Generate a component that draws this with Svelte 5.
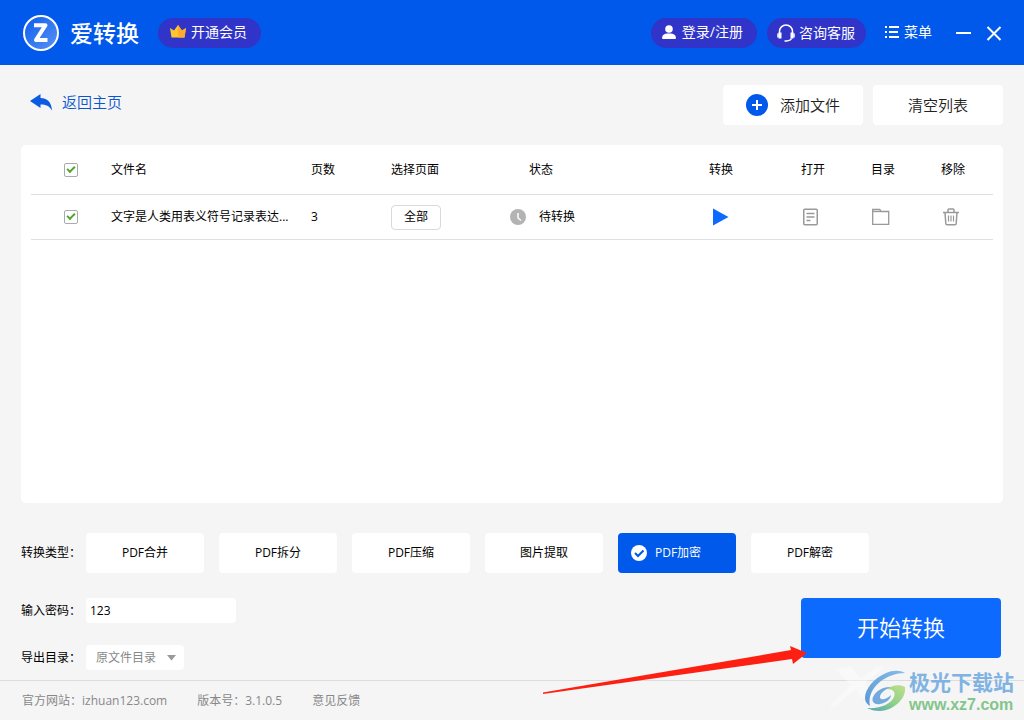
<script>
  const columns = ['文件名', '页数', '选择页面', '状态', '转换', '打开', '目录', '移除'];
  const types = ['PDF合并', 'PDF拆分', 'PDF压缩', '图片提取', 'PDF加密', 'PDF解密'];

  let files = [
    { name: '文字是人类用表义符号记录表达...', pages: 3, range: '全部', status: '待转换', checked: true }
  ];
  let allChecked = true;
  let selected = 'PDF加密';
  let password = '123';

  function toggleAll() {
    files = files.map((f) => ({ ...f, checked: allChecked }));
  }

  function remove(file) {
    files = files.filter((f) => f !== file);
  }
</script>

<div class="app">
  <header>
    <svg class="logo" width="36" height="36" viewBox="0 0 36 36" aria-hidden="true">
      <defs>
        <linearGradient id="disc" x1="0" y1="0" x2="1" y2="1">
          <stop offset="0" stop-color="#0a5cec" />
          <stop offset="1" stop-color="#5c93f5" />
        </linearGradient>
      </defs>
      <circle cx="18" cy="18" r="17" fill="url(#disc)" stroke="#fff" stroke-width="2" />
      <path d="M11 10.200H22.500L13 25H24.500" fill="none" stroke="#fff" stroke-width="4" stroke-linejoin="round" />
    </svg>
    <h1>爱转换</h1>
    <button class="pill vip">
      <svg width="16" height="14" viewBox="0 0 16 14" aria-hidden="true">
        <path d="M0 3l4 2.500L8 0l4 5.500L16 3l-1.500 9.500h-13z" fill="#fdc62f" />
        <path d="M8 0l4 5.500L16 3l-1.500 9.500H8z" fill="#ffab2e" />
      </svg>
      开通会员
    </button>
    <div class="tools">
      <button class="pill">
        <svg width="14" height="14" viewBox="0 0 14 14" fill="#fff" aria-hidden="true">
          <circle cx="7" cy="4" r="3.800" />
          <path d="M1 14q-1 0-1-1.500C.5 9.500 3 8.500 5 8.500h4c2 0 4.500 1 5 4q0 1.500-1 1.500z" />
        </svg>
        登录/注册
      </button>
      <button class="pill service">
        <svg width="18" height="18" viewBox="0 0 18 18" fill="none" stroke="#fff" aria-hidden="true">
          <path d="M2.500 10V7.500a6.500 6.500 0 0 1 13 0V10" stroke-width="1.500" />
          <path d="M3 8.500v6M15 8.500v6" stroke-width="3" />
          <path d="M1 9.500v4M17 9.500v4" stroke-width="1.500" />
          <path d="M14.500 14.500q-1 2.200-5 2.500H7.500" stroke-width="1.300" />
        </svg>
        咨询客服
      </button>
      <button class="menu">
        <svg width="14" height="12" viewBox="0 0 14 12" fill="#fff" aria-hidden="true">
          <path d="M0 0h2v2H0zM4 0h10v2H4zM0 5h2v2H0zM4 5h9v2H4zM0 10h2v2H0zM4 10h10v2H4z" />
        </svg>
        菜单
      </button>
      <button class="win" aria-label="最小化">
        <svg width="16" height="16" viewBox="0 0 16 16"><path d="M0 8h15" stroke="#fff" stroke-width="2" /></svg>
      </button>
      <button class="win" aria-label="关闭">
        <svg width="16" height="16" viewBox="0 0 16 16"><path d="M1.500 2l13 13M14.500 2l-13 13" stroke="#fff" stroke-width="2" /></svg>
      </button>
    </div>
  </header>

  <main>
    <div class="bar">
      <a class="back" href="#home">
        <svg width="22" height="17" viewBox="0 0 22 17" aria-hidden="true">
          <path d="M0 7L10.500 0v4C17 4 21.500 8 22 16.500 19.500 12 16 10.500 10.500 10.500V14z" fill="#0b5be3" />
        </svg>
        返回主页
      </a>
      <button class="add">
        <svg width="22" height="22" viewBox="0 0 22 22" aria-hidden="true">
          <circle cx="11" cy="11" r="11" fill="#0059ea" />
          <path d="M6 11h10M11 6v10" stroke="#fff" stroke-width="2" />
        </svg>
        添加文件
      </button>
      <button class="clear" on:click={() => (files = [])}>清空列表</button>
    </div>

    <section class="card">
      <table>
        <colgroup>
          <col class="c-check" /><col /><col class="c-pages" /><col class="c-range" /><col class="c-status" />
          <col class="c-run" /><col class="c-icon" /><col class="c-icon" /><col class="c-last" />
        </colgroup>
        <thead>
          <tr>
            <th class="check"><input type="checkbox" aria-label="全选" bind:checked={allChecked} on:change={toggleAll} /></th>
            {#each columns as col}
              <th class:status={col === '状态'}>{col}</th>
            {/each}
          </tr>
        </thead>
        <tbody>
          {#each files as file}
            <tr>
              <td class="check"><input type="checkbox" aria-label={file.name} bind:checked={file.checked} /></td>
              <td>{file.name}</td>
              <td>{file.pages}</td>
              <td><button class="range">{file.range}</button></td>
              <td>
                <span class="state">
                  <svg width="16" height="16" viewBox="0 0 16 16" aria-hidden="true">
                    <circle cx="8" cy="8" r="8" fill="#b3b3b3" />
                    <path d="M8 4v5l3 2.500" fill="none" stroke="#fff" stroke-width="1.500" />
                  </svg>
                  {file.status}
                </span>
              </td>
              <td>
                <button class="icon run" aria-label="转换">
                  <svg width="18" height="18" viewBox="0 0 18 18"><path d="M1 .5L16.500 9 1 17.500z" fill="#0d6aff" /></svg>
                </button>
              </td>
              <td>
                <button class="icon" aria-label="打开">
                  <svg width="18" height="18" viewBox="0 0 18 18" fill="none" stroke="#999" stroke-width="1.500">
                    <rect x="1.750" y="1.250" width="13.500" height="15.500" rx="1" />
                    <path d="M4.500 5.500h8M4.500 9h8M4.500 12.500h4" />
                  </svg>
                </button>
              </td>
              <td>
                <button class="icon" aria-label="目录">
                  <svg width="18" height="18" viewBox="0 0 18 18" fill="none" stroke="#999" stroke-width="1.300">
                    <path d="M.7 16.300V1.500h7l1.500 2h7.500v12.800z" />
                    <path d="M.7 3.500h8.500" />
                  </svg>
                </button>
              </td>
              <td>
                <button class="icon" aria-label="移除" on:click={() => remove(file)}>
                  <svg width="18" height="18" viewBox="0 0 18 18" fill="none" stroke="#999" stroke-width="1.500">
                    <path d="M1 4.500h16M6 4V2q0-1 1-1h4q1 0 1 1v2M3 4.500l.8 11q.1 1.200 1.200 1.200h8q1.100 0 1.200-1.200l.8-11" />
                    <path d="M6.500 7.500v6M9 7.500v6M11.500 7.500v6" stroke-width="1.200" />
                  </svg>
                </button>
              </td>
            </tr>
          {/each}
        </tbody>
      </table>
    </section>

    <div class="types">
      <span class="label">转换类型：</span>
      {#each types as type}
        <button class="type" class:active={selected === type} on:click={() => (selected = type)}>
          {#if selected === type}
            <svg width="16" height="16" viewBox="0 0 16 16" aria-hidden="true">
              <circle cx="8" cy="8" r="8" fill="#fff" />
              <path d="M4 8l3 3 5.500-5.500" fill="none" stroke="#0059ea" stroke-width="2" />
            </svg>
          {/if}
          {type}
        </button>
      {/each}
    </div>

    <div class="bottom">
      <div class="fields">
        <div class="field">
          <label class="label" for="password">输入密码：</label>
          <input id="password" type="text" bind:value={password} />
        </div>
        <div class="field">
          <label class="label" for="output">导出目录：</label>
          <div class="select">
            <select id="output">
              <option>原文件目录</option>
              <option>自定义目录</option>
            </select>
            <svg width="9" height="6" viewBox="0 0 9 6" aria-hidden="true"><path d="M0 0h9L4.500 5.500z" fill="#999" /></svg>
          </div>
        </div>
      </div>
      <button class="start">开始转换</button>
    </div>
  </main>

  <footer>
    <span>官方网站：<a href="#site">izhuan123.com</a></span>
    <span>版本号：3.1.0.5</span>
    <a href="#feedback">意见反馈</a>
  </footer>

  <svg class="pointer" width="270" height="60" viewBox="0 0 270 60" aria-hidden="true">
    <path d="M3 52.500L251 10 250 6l17 7-14 11-1-5L3 54z" fill="#fd2012" />
  </svg>

  <div class="mark">
    <svg width="80" height="52" viewBox="0 0 80 52" aria-hidden="true">
      <defs>
        <linearGradient id="leaf" x1="0" y1="1" x2="1" y2="0">
          <stop offset="0" stop-color="#4fa3b8" />
          <stop offset=".5" stop-color="#8fd08a" />
          <stop offset="1" stop-color="#bfe08c" />
        </linearGradient>
        <linearGradient id="wave" x1="0" y1="1" x2="1" y2="0">
          <stop offset="0" stop-color="#5b97d4" />
          <stop offset="1" stop-color="#84bdea" />
        </linearGradient>
      </defs>
      <path d="M4 6l16-2 10 11L46 4h8L34 20l9 14H30l-5-8L2 45l-4-1 22-22z" fill="#fff" opacity=".4" />
      <path d="M74 10C69 7 62 7 55 10 43 15 34 26 34 35c0 4 2 6 5 8-2-9 2-18 11-25 7-5 15-8 24-8z" fill="url(#wave)" />
      <path d="M64 25C56 22 46 26 42 34c-2 5 2 8 7 7 6-1 11-5 11-9-3 3-7 5-10 4-3-2 1-8 6-10 2-1 5-1 8-1z" fill="#74a9de" />
      <path d="M36 45c8 4 18 4 26-1 8-5 13-12 12-20-5-3-13-2-18 2 6 0 9 3 7 8-3 7-14 12-27 11z" fill="url(#leaf)" />
    </svg>
    <div class="words">
      <strong>极光下载站</strong>
      <span>www.xz7.com</span>
    </div>
  </div>
</div>

<style>
  :global(body) {
    background: #f5f5f5;
  }

  .app {
    position: relative;
    display: flex;
    flex-direction: column;
    min-height: 100vh;
    font-family: "Open Sans", "Noto Sans CJK SC", sans-serif;
    font-size: 12px;
    line-height: 18px;
    color: #000;
  }

  button,
  input,
  select {
    font: inherit;
    color: inherit;
    border: none;
    margin: 0;
    padding: 0;
  }

  button {
    display: flex;
    align-items: center;
    justify-content: center;
    border-radius: 4px;
    background: #fff;
    white-space: nowrap;
    cursor: pointer;
  }

  svg {
    display: block;
    flex: none;
  }

  a {
    color: inherit;
    text-decoration: none;
  }

  header {
    display: flex;
    align-items: center;
    height: 65px;
    box-sizing: border-box;
    padding: 0 22px 0 23px;
    background: #0059ea;
    color: #fff;
  }

  h1 {
    margin: 0 19px 0 11px;
    font-size: 23px;
    line-height: 32px;
    font-weight: 500;
  }

  .pill {
    height: 30px;
    padding: 0 14px 2px 11px;
    box-sizing: border-box;
    gap: 6px;
    border-radius: 15px;
    background: #3034c8;
    font-size: 14px;
  }

  .vip {
    gap: 5px;
    padding-left: 12px;
  }

  .tools {
    display: flex;
    align-items: center;
    gap: 10px;
    margin-left: auto;
  }

  .service {
    gap: 4px;
    padding: 0 11px 0 10px;
  }

  .menu {
    gap: 5px;
    margin: 0 14px 0 9px;
    padding-bottom: 2px;
    background: none;
    font-size: 14px;
  }

  .win {
    background: none;
  }

  .win + .win {
    margin-left: 4px;
  }

  main {
    display: flex;
    flex: 1;
    flex-direction: column;
    padding: 20px 21px 10px;
  }

  .bar {
    display: flex;
    gap: 10px;
    margin-bottom: 20px;
    font-size: 15px;
    font-weight: 350;
    color: #222;
  }

  .back {
    display: flex;
    align-items: center;
    gap: 10px;
    height: 34px;
    margin: 0 auto 0 9px;
    color: #0b55cf;
  }

  .bar button {
    height: 40px;
  }

  .add {
    width: 140px;
    gap: 12px;
  }

  .clear {
    width: 130px;
  }

  .card {
    flex: 1;
    padding: 0 10px;
    border-radius: 5px;
    background: #fff;
  }

  table {
    width: 100%;
    table-layout: fixed;
    border-collapse: collapse;
  }

  th,
  td {
    height: 44px;
    padding: 0;
    border-bottom: 1px solid #e0e0e0;
    font-weight: 400;
    text-align: left;
    white-space: nowrap;
  }

  th {
    height: 49px;
  }

  .c-check,
  .c-pages {
    width: 80px;
  }

  .c-range {
    width: 118px;
  }

  .c-status {
    width: 200px;
  }

  .c-run {
    width: 92px;
  }

  .c-icon {
    width: 70px;
  }

  .c-last {
    width: 52px;
  }

  .status {
    padding-left: 20px;
  }

  .check {
    text-align: center;
  }

  input[type="checkbox"] {
    position: relative;
    appearance: none;
    display: block;
    width: 14px;
    height: 14px;
    margin: 0 auto;
    box-sizing: border-box;
    border: 1px solid #aaa;
    border-radius: 2px;
    background: #fff;
  }

  input[type="checkbox"]:checked::after {
    content: "";
    position: absolute;
    left: 2px;
    top: 2px;
    width: 6px;
    height: 3px;
    border: solid #4fa52c;
    border-width: 0 0 2px 2px;
    transform: rotate(-45deg);
  }

  .range {
    width: 50px;
    height: 25px;
    border: 1px solid #d9d9d9;
  }

  .state {
    display: flex;
    align-items: center;
    gap: 13px;
    padding-left: 1px;
  }

  .icon {
    margin-left: 1px;
    background: none;
  }

  .run {
    margin-left: 3px;
  }

  .types {
    display: flex;
    align-items: center;
    gap: 15px;
    margin: 30px 0 25px;
  }

  .label {
    flex: none;
    width: 65px;
    white-space: nowrap;
  }

  .types .label {
    margin-right: -15px;
  }

  .type {
    gap: 8px;
    width: 118px;
    height: 40px;
  }

  .active {
    justify-content: flex-start;
    padding-left: 13px;
    background: #0059ea;
    color: #fff;
  }

  .bottom {
    display: flex;
    justify-content: space-between;
    align-items: flex-start;
    padding-right: 2px;
  }

  .fields {
    display: grid;
    gap: 22px;
  }

  .field {
    display: flex;
    align-items: center;
  }

  .field input {
    width: 150px;
    height: 25px;
    box-sizing: border-box;
    padding: 0 4px;
    border-radius: 4px;
    background: #fff;
    font-size: 12px;
  }

  .select {
    position: relative;
    color: #888;
  }

  select {
    appearance: none;
    display: block;
    width: 98px;
    height: 25px;
    padding: 0 10px;
    border-radius: 4px;
    background: #fff;
  }

  .select svg {
    position: absolute;
    right: 8px;
    top: 10px;
    pointer-events: none;
  }

  .start {
    width: 200px;
    height: 60px;
    box-sizing: border-box;
    padding-bottom: 2px;
    background: #0d6aff;
    color: #fff;
    font-size: 22px;
    line-height: 32px;
    font-weight: 350;
  }

  footer {
    display: flex;
    align-items: center;
    gap: 30px;
    height: 39px;
    padding: 0 22px;
    border-top: 1px solid #dcdcdc;
    color: #888;
  }

  .pointer {
    position: absolute;
    right: 214px;
    bottom: 20px;
    pointer-events: none;
  }

  .mark {
    position: absolute;
    right: 10px;
    bottom: 5px;
    display: flex;
    align-items: flex-end;
    pointer-events: none;
  }

  .words {
    display: flex;
    flex-direction: column;
    margin-left: -2px;
    color: #80b3e2;
  }

  .words strong {
    font-size: 21px;
    line-height: 26px;
    font-weight: 700;
  }

  .words span {
    font-family: "Liberation Sans", Arial, sans-serif;
    font-size: 16px;
    line-height: 20px;
    font-weight: 700;
    color: #83c58b;
  }
</style>
